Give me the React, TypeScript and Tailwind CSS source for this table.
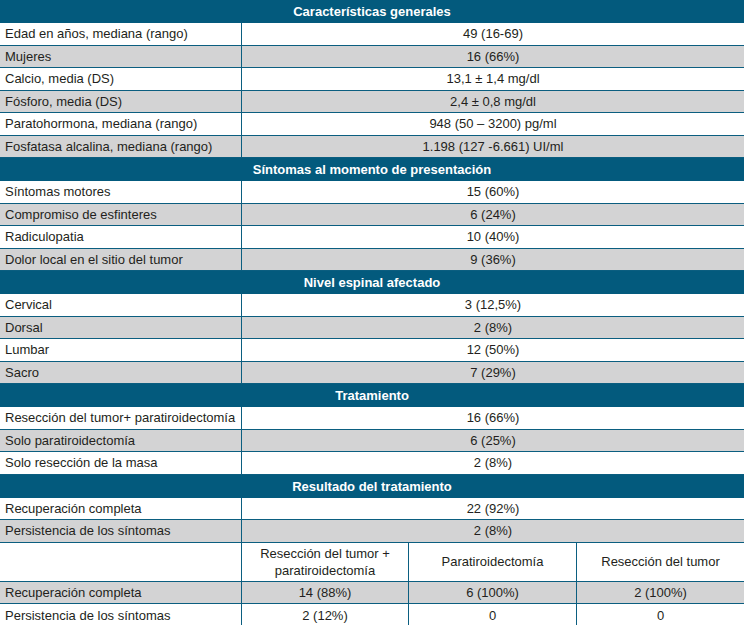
import React from 'react';

type Row = { label: string; value: string };
type Section = { title: string; rows: Row[] };

const sections: Section[] = [
  {
    title: 'Características generales',
    rows: [
      { label: 'Edad en años, mediana (rango)', value: '49 (16-69)' },
      { label: 'Mujeres', value: '16 (66%)' },
      { label: 'Calcio, media (DS)', value: '13,1 ± 1,4 mg/dl' },
      { label: 'Fósforo, media (DS)', value: '2,4 ± 0,8 mg/dl' },
      { label: 'Paratohormona, mediana (rango)', value: '948 (50 – 3200) pg/ml' },
      { label: 'Fosfatasa alcalina, mediana (rango)', value: '1.198 (127 -6.661) UI/ml' },
    ],
  },
  {
    title: 'Síntomas al momento de presentación',
    rows: [
      { label: 'Síntomas motores', value: '15 (60%)' },
      { label: 'Compromiso de esfinteres', value: '6 (24%)' },
      { label: 'Radiculopatia', value: '10 (40%)' },
      { label: 'Dolor local en el sitio del tumor', value: '9 (36%)' },
    ],
  },
  {
    title: 'Nivel espinal afectado',
    rows: [
      { label: 'Cervical', value: '3 (12,5%)' },
      { label: 'Dorsal', value: '2 (8%)' },
      { label: 'Lumbar', value: '12 (50%)' },
      { label: 'Sacro', value: '7 (29%)' },
    ],
  },
  {
    title: 'Tratamiento',
    rows: [
      { label: 'Resección del tumor+ paratiroidectomía', value: '16 (66%)' },
      { label: 'Solo paratiroidectomía', value: '6 (25%)' },
      { label: 'Solo resección de la masa', value: '2 (8%)' },
    ],
  },
  {
    title: 'Resultado del tratamiento',
    rows: [
      { label: 'Recuperación completa', value: '22 (92%)' },
      { label: 'Persistencia de los síntomas', value: '2 (8%)' },
    ],
  },
];

const outcomes = [
  { label: 'Recuperación completa', values: ['14 (88%)', '6 (100%)', '2 (100%)'] },
  { label: 'Persistencia de los síntomas', values: ['2 (12%)', '0', '0'] },
];

export default function App() {
  return (
    <div
      className="w-[744px] bg-white text-[13px] leading-none text-[#231f20]"
      style={{ fontFamily: '"Liberation Sans", Arial, sans-serif' }}
    >
      {sections.map((section) => (
        <div key={section.title}>
          {/* Section header */}
          <div className="flex h-[23px] items-center justify-center bg-[#035a7d] font-bold text-white">
            {section.title}
          </div>
          {section.rows.map((row, i) => (
            <div
              key={row.label}
              className={`flex h-[22.5px] border-b border-[#0b5e80] ${i % 2 === 1 ? 'bg-[#d3d3d4]' : 'bg-white'}`}
            >
              <div className="flex w-[242px] shrink-0 items-center border-r border-[#0b5e80] pl-[5px]">
                {row.label}
              </div>
              <div className="flex flex-1 items-center justify-center">{row.value}</div>
            </div>
          ))}
        </div>
      ))}

      {/* Breakdown by treatment */}
      <div className="flex h-[39px] border-b border-[#0b5e80] bg-white">
        <div className="w-[242px] shrink-0 border-r border-[#0b5e80]" />
        <div className="flex w-[167px] shrink-0 items-center justify-center border-r border-[#0b5e80] text-center leading-[17px]">
          Resección del tumor +<br />paratiroidectomía
        </div>
        <div className="flex w-[168px] shrink-0 items-center justify-center border-r border-[#0b5e80]">
          Paratiroidectomía
        </div>
        <div className="flex flex-1 items-center justify-center">Resección del tumor</div>
      </div>
      {outcomes.map((row, i) => (
        <div
          key={row.label}
          className={`flex h-[22.5px] ${i === 0 ? 'border-b border-[#0b5e80] bg-[#d3d3d4]' : 'bg-white'}`}
        >
          <div className="flex w-[242px] shrink-0 items-center border-r border-[#0b5e80] pl-[5px]">
            {row.label}
          </div>
          <div className="flex w-[167px] shrink-0 items-center justify-center border-r border-[#0b5e80]">
            {row.values[0]}
          </div>
          <div className="flex w-[168px] shrink-0 items-center justify-center border-r border-[#0b5e80]">
            {row.values[1]}
          </div>
          <div className="flex flex-1 items-center justify-center">{row.values[2]}</div>
        </div>
      ))}
    </div>
  );
}
